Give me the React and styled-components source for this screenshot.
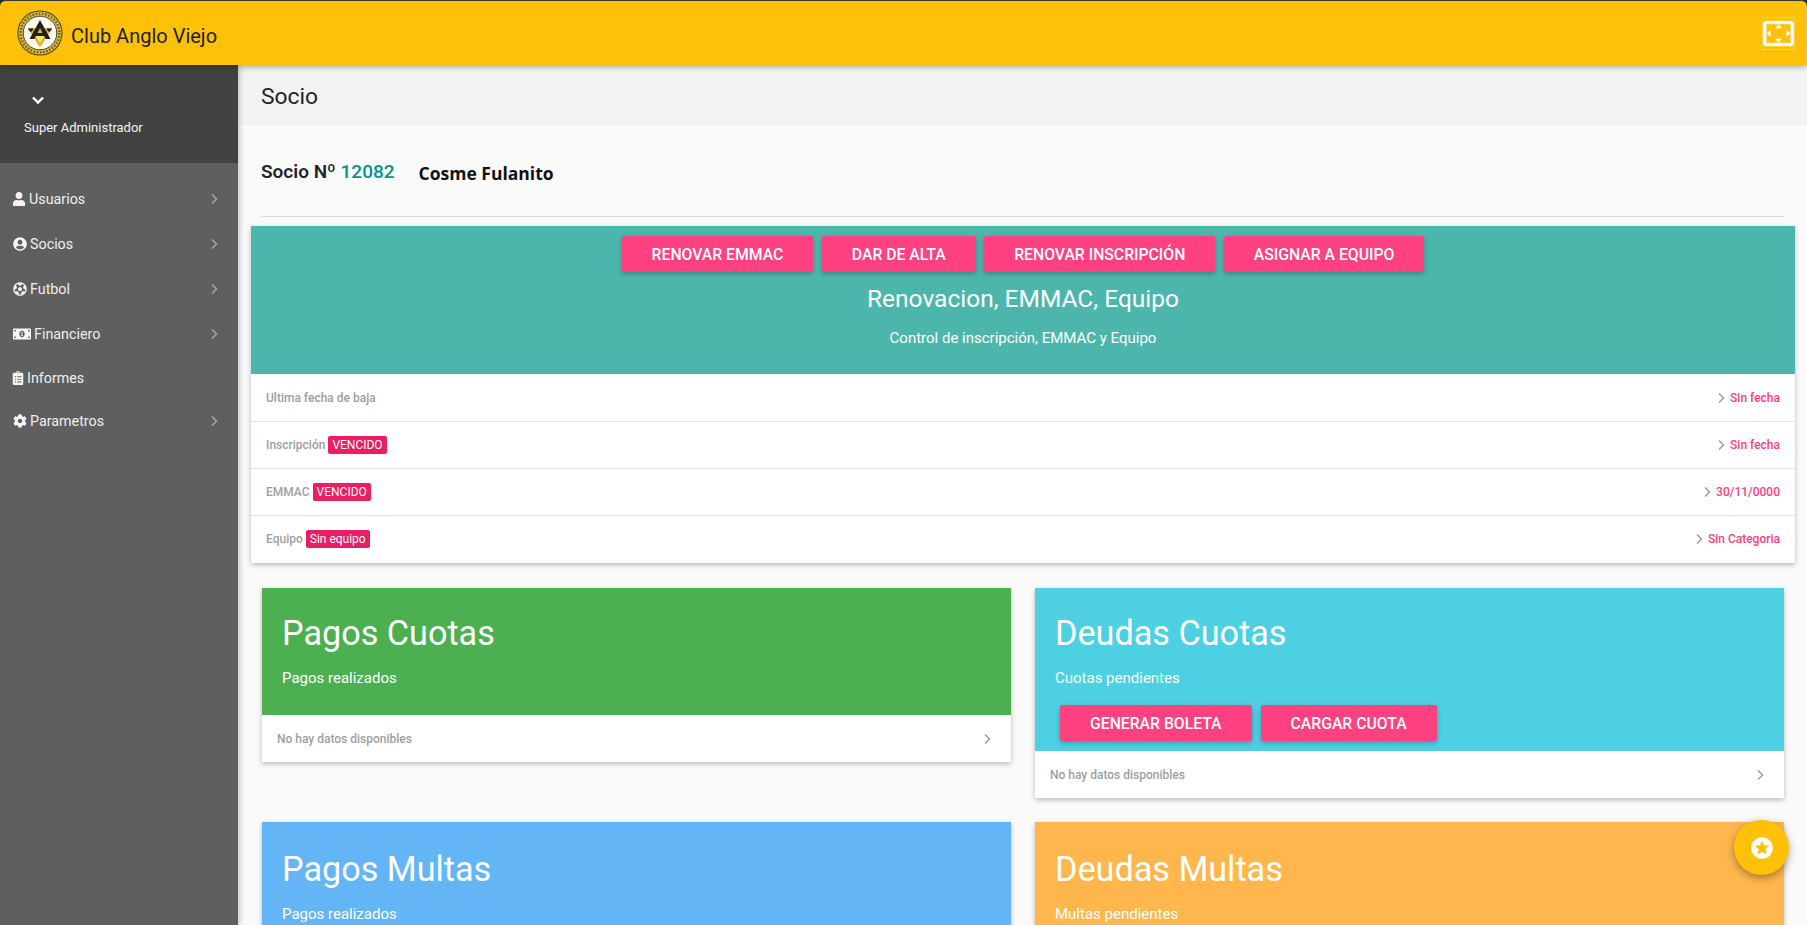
import React from 'react';
import styled, { createGlobalStyle } from 'styled-components';
import { FaUser, FaUserCircle, FaFutbol, FaMoneyBillAlt, FaClipboardList, FaCog } from 'react-icons/fa';
import { MdSettingsOverscan, MdStars } from 'react-icons/md';

const Global = createGlobalStyle`
  html, body { margin: 0; padding: 0; height: 100%; overflow: hidden; background: #fafafa; }
  body { font-family: Roboto, "Liberation Sans", sans-serif; color: #212529; }
  * { box-sizing: border-box; }
`;
const Shell = styled.div`height: 925px; width: 1807px; overflow: hidden; display: flex; flex-direction: column; position: relative; background: #2d2d2d;`;
const Header = styled.header`
  height: 65px; flex: none; background: #ffc107; border-top: 1px solid #3a3a3a; border-radius: 6px 6px 0 0;
  display: flex; align-items: center; padding: 0 16px 0 17px; position: relative; z-index: 3;
  box-shadow: 0 2px 6px rgba(0,0,0,.3);
`;
const Brand = styled.div`font-size: 20px; color: #212121; margin-left: 8px; margin-top: 5px;`;
const Spacer = styled.div`flex: 1;`;
const ExpandBtn = styled.div`display: flex; color: #fff; margin-right: -4px;`;
const Body = styled.div`flex: 1; display: flex; min-height: 0;`;
const Sidebar = styled.aside`width: 238px; flex: none; background: #5f5f5f; position: relative; z-index: 2; box-shadow: 2px 0 5px rgba(0,0,0,.2);`;
const UserBox = styled.div`height: 98px; background: #424242; color: #fff; padding: 28px 0 0 24px;`;
const UserChevron = styled.div`display: flex; margin-left: 7px; height: 14px;`;
const UserName = styled.div`font-size: 13px; margin-top: 13px; line-height: 16px; color: #f4f4f4;`;
const Menu = styled.nav`padding-top: 14px;`;
const MenuItem = styled.div`
  height: ${p => p.$h}px; display: flex; align-items: center; padding: 0 18px 0 13px; color: #eeeeee; font-size: 14.3px; font-weight: 400;
`;
const MenuIcon = styled.span`display: flex; margin: 0 ${p => p.$gap}px 0 ${p => p.$ml || 0}px; color: #f5f5f5;`;
const MenuLabel = styled.span`flex: 1;`;
const Main = styled.main`flex: 1; min-width: 0; background: #fafafa;`;
const TitleBar = styled.div`height: 60px; background: #f3f3f3; padding: 2px 0 0 23px; display: flex; align-items: center; font-size: 22.8px; font-weight: 400; color: #212529;`;
const Section = styled.div`padding: 0 22px 0 23px;`;
const SocioRow = styled.div`height: 92px; padding-top: 4px; display: flex; align-items: center; border-bottom: 1px solid #dedede;`;
const SocioNo = styled.span`font-size: 19px; font-weight: 600; color: #212529; margin-top: -2px;`;
const SocioNum = styled.span`color: #009688; font-weight: 500;`;
const SocioName = styled.span`font-family: "Open Sans", sans-serif; font-weight: 700; font-size: 17.5px; color: #111; margin-left: 24px;`;
const Card = styled.div`background: #fff; box-shadow: 0 2px 5px rgba(0,0,0,.26);`;
const WideCard = styled(Card)`margin: 9px -10px 0 -10px; padding-bottom: 1px;`;
const WideHead = styled.div`height: 148px; background: #4db6ac; color: #fff; text-align: center; padding-top: 10px;`;
const BtnRow = styled.div`display: flex; gap: ${p => p.$gap || 8.5}px; justify-content: ${p => p.$left ? 'flex-start' : 'center'}; margin-left: ${p => p.$left ? 5 : 0}px;`;
const Btn = styled.button`
  height: 36px; border: 0; border-radius: 2px; background: #ff4081; color: #fff; font: 500 15.75px Roboto, sans-serif; padding: 0 30px;
  text-transform: uppercase; box-shadow: 0 2px 5px rgba(0,0,0,.26); white-space: nowrap;
`;
const WideTitle = styled.div`font-size: 24.5px; line-height: 32px; margin-top: 11px;`;
const WideSub = styled.div`font-size: 15px; line-height: 20px; margin-top: 13px;`;
const Row = styled.div`
  height: ${p => p.$h || 47}px; display: flex; align-items: center; padding: 0 ${p => p.$pr || 15}px 0 15px; border-top: ${p => p.$first ? 0 : 1}px solid #e0e0e0;
  font-size: 12px; font-weight: 500; color: #9e9e9e;
`;
const RowLabel = styled.span`flex: 1; display: flex; align-items: center;`;
const Badge = styled.span`
  background: #e91e63; color: #fff; font-weight: 400; font-size: 12px; line-height: 18px; padding: 0 4px; border-radius: 2px; margin-left: 3px;
`;
const RowValue = styled.span`color: #ff4081; margin-left: 3px;`;
const Chev = ({ size = 12, color = '#9e9e9e' }) => (
  <svg width={size} height={size} viewBox="0 0 12 12" fill="none" stroke={color} strokeWidth="1.5"><path d="M4 1.5 8.5 6 4 10.5" /></svg>
);
const Grid = styled.div`display: grid; grid-template-columns: 749px 749px; column-gap: 24px; row-gap: 24px; margin: 25px 0 0 1px; align-items: start;`;
const InfoHead = styled.div`background: ${p => p.$bg}; color: #fff; padding: ${p => p.$pt}px 20px ${p => p.$pb}px;`;
const InfoTitle = styled.div`font-size: 34.2px; line-height: 44px;`;
const InfoSub = styled.div`font-size: 15px; line-height: 22px; margin-top: ${p => p.$mt}px; margin-bottom: 16px;`;
const Fab = styled.div`
  position: absolute; left: 1734px; top: 820px; width: 55px; height: 55px; border-radius: 50%; background: #ffc107; color: #fff;
  display: flex; align-items: center; justify-content: center; box-shadow: 0 3px 8px rgba(0,0,0,.35); z-index: 5;
`;

const Logo = () => (
  <svg width="46" height="46" viewBox="0 0 46 46">
    <circle cx="23" cy="23" r="22.6" fill="#4a4128" />
    <circle cx="23" cy="23" r="21.6" fill="#dcb93a" />
    <circle cx="23" cy="23" r="19.4" fill="none" stroke="#6b5d2c" strokeWidth="2.4" strokeDasharray="1.6 1.6" />
    <circle cx="23" cy="23" r="16.8" fill="#fdfbf0" stroke="#4a4128" strokeWidth="1" />
    <path d="M10.5 18h25L23 37.5z" fill="#d8b62c" />
    <path d="M16 22h14l-7 11z" fill="#f6e27a" />
    <path d="M23 10 33.5 29h-4.8l-1.5-3h-8.4l-1.5 3h-4.8zM23 18 20.6 22.8h4.8z" fill="#231f20" fillRule="evenodd" />
    <path d="M11 18.5h5.5l-1.6 3h-2zM35 18.5h-5.5l1.6 3h2z" fill="#231f20" />
  </svg>
);

const menu = [
  { label: 'Usuarios', icon: <FaUser size={14} />, ml: -1, gap: 3, h: 44, chev: true },
  { label: 'Socios', icon: <FaUserCircle size={14} />, gap: 3, h: 45, chev: true },
  { label: 'Futbol', icon: <FaFutbol size={14} />, gap: 3, h: 45, chev: true },
  { label: 'Financiero', icon: <FaMoneyBillAlt size={18} />, gap: 3, h: 45, chev: true },
  { label: 'Informes', icon: <FaClipboardList size={14} />, ml: -2, gap: 2, h: 43, chev: false },
  { label: 'Parametros', icon: <FaCog size={14} />, gap: 3, h: 44, chev: true },
];
const rows = [
  { label: 'Ultima fecha de baja', value: 'Sin fecha' },
  { label: 'Inscripción', badge: 'VENCIDO', value: 'Sin fecha' },
  { label: 'EMMAC', badge: 'VENCIDO', value: '30/11/0000' },
  { label: 'Equipo', badge: 'Sin equipo', value: 'Sin Categoria' },
];

const Info = ({ bg, title, sub, buttons, pt, mt, pb }) => (
  <Card>
    <InfoHead $bg={bg} $pt={pt} $pb={pb}>
      <InfoTitle>{title}</InfoTitle>
      <InfoSub $mt={mt}>{sub}</InfoSub>
      {buttons && <BtnRow $left $gap={9}>{buttons.map(b => <Btn key={b}>{b}</Btn>)}</BtnRow>}
    </InfoHead>
    <Row $first $pr={18}>
      <RowLabel>No hay datos disponibles</RowLabel>
      <Chev />
    </Row>
  </Card>
);

export default function App() {
  return (
    <Shell>
      <Global />
      <Header>
        <Logo />
        <Brand>Club Anglo Viejo</Brand>
        <Spacer />
        <ExpandBtn><MdSettingsOverscan size={33} stroke="#fff" strokeWidth={0.4} /></ExpandBtn>
      </Header>
      <Body>
        <Sidebar>
          <UserBox>
            <UserChevron>
              <svg width="14" height="14" viewBox="0 0 14 14" fill="none" stroke="#fff" strokeWidth="2.4"><path d="M2 4.5 7 9.5 12 4.5" /></svg>
            </UserChevron>
            <UserName>Super Administrador</UserName>
          </UserBox>
          <Menu>
            {menu.map(m => (
              <MenuItem key={m.label} $h={m.h}>
                <MenuIcon $ml={m.ml} $gap={m.gap}>{m.icon}</MenuIcon>
                <MenuLabel>{m.label}</MenuLabel>
                {m.chev && <Chev color="#a8a8a8" />}
              </MenuItem>
            ))}
          </Menu>
        </Sidebar>
        <Main>
          <TitleBar>Socio</TitleBar>
          <Section>
            <SocioRow>
              <SocioNo>Socio Nº <SocioNum>12082</SocioNum></SocioNo>
              <SocioName>Cosme Fulanito</SocioName>
            </SocioRow>
            <WideCard>
              <WideHead>
                <BtnRow>
                  {['Renovar EMMAC', 'Dar de alta', 'Renovar inscripción', 'Asignar a equipo'].map(b => <Btn key={b}>{b}</Btn>)}
                </BtnRow>
                <WideTitle>Renovacion, EMMAC, Equipo</WideTitle>
                <WideSub>Control de inscripción, EMMAC y Equipo</WideSub>
              </WideHead>
              {rows.map((r, i) => (
                <Row key={r.label} $first={i === 0}>
                  <RowLabel>{r.label}{r.badge && <Badge>{r.badge}</Badge>}</RowLabel>
                  <Chev />
                  <RowValue>{r.value}</RowValue>
                </Row>
              ))}
            </WideCard>
            <Grid>
              <Info bg="#4caf50" title="Pagos Cuotas" sub="Pagos realizados" pt={23} mt={12} pb={10} />
              <Info bg="#4dd0e1" title="Deudas Cuotas" sub="Cuotas pendientes" buttons={['Generar boleta', 'Cargar cuota']} pt={23} mt={12} pb={10} />
              <Info bg="#64b5f6" title="Pagos Multas" sub="Pagos realizados" pt={25} mt={12} pb={10} />
              <Info bg="#ffb74d" title="Deudas Multas" sub="Multas pendientes" pt={25} mt={12} pb={10} />
            </Grid>
          </Section>
        </Main>
      </Body>
      <Fab><MdStars size={26} /></Fab>
    </Shell>
  );
}
